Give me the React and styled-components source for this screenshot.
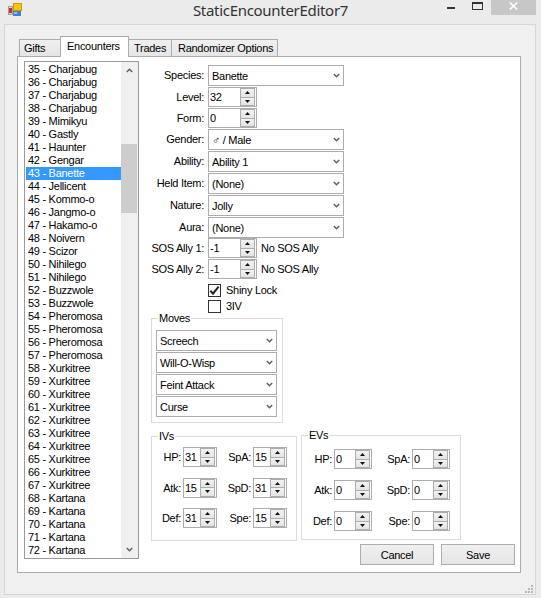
import React from "react";
import styled, { createGlobalStyle } from "styled-components";

const GlobalStyle = createGlobalStyle`
  html, body { margin: 0; padding: 0; background: #ebebeb; }
  #root { width: 541px; height: 598px; }
  *, *::before, *::after { box-sizing: border-box; }
`;

const UI_FONT = `"Liberation Sans", Arial, sans-serif`;

const Window = styled.div`
  width: 541px;
  height: 598px;
  background: #ebebeb;
  display: flex;
  flex-direction: column;
  overflow: hidden;
  font-family: ${UI_FONT};
  font-size: 11px;
  letter-spacing: -0.28px;
  color: #000;
`;

const TitleBar = styled.div`
  height: 24px;
  flex-shrink: 0;
  display: grid;
  grid-template-columns: 1fr auto 1fr;
  align-items: start;
`;

const AppIconWrap = styled.div`
  padding: 3px 0 0 8px;
  display: flex;
`;

const Title = styled.div`
  font-family: "Noto Sans", "Open Sans", sans-serif;
  font-size: 15px;
  letter-spacing: -0.3px;
  color: #333;
  line-height: 21px;
`;

const CaptionButtons = styled.div`
  justify-self: end;
  display: flex;
  margin-right: 5px;
`;

const CaptionButton = styled.div`
  width: ${(p) => p.$w}px;
  height: 15px;
  display: flex;
  justify-content: center;
  align-items: flex-start;
  background: ${(p) => p.$bg || "transparent"};
`;

const MinGlyph = styled.span`
  width: 8px;
  height: 2px;
  background: #333;
  margin-top: 7px;
`;

const MaxGlyph = styled.span`
  width: 11px;
  height: 8px;
  border: 1px solid #333;
  border-top-width: 2px;
  margin-top: 2px;
`;

const Client = styled.div`
  position: relative;
  flex: 1;
  margin: 0 5px 3px 4px;
  border: 1px solid #d6d6d6;
  background: #f0f0f0;
  padding: 11px 0 0 12px;
`;

const Grip = styled.svg`
  position: absolute;
  right: 2px;
  bottom: 1px;
`;

const Tabs = styled.div`
  width: 504px;
`;

const TabStrip = styled.div`
  height: 20px;
  display: flex;
  align-items: flex-end;
  padding-left: 2px;
  position: relative;
  z-index: 1;
`;

const Tab = styled.div`
  width: ${(p) => p.$w}px;
  height: ${(p) => (p.$active ? 21 : 17)}px;
  margin-left: -1px;
  margin-bottom: ${(p) => (p.$active ? -1 : 0)}px;
  padding-left: ${(p) => p.$pl}px;
  border: 1px solid #acacac;
  border-bottom: none;
  background: ${(p) =>
    p.$active ? "#ffffff" : "linear-gradient(#f0f0f0, #e5e5e5)"};
  line-height: ${(p) => (p.$active ? 18 : 16)}px;
  white-space: nowrap;
  position: relative;
  z-index: ${(p) => (p.$active ? 2 : 1)};
  &:first-child { margin-left: 0; }
`;

const TabPage = styled.div`
  width: 504px;
  height: 517px;
  border: 1px solid #acacac;
  background: #fff;
  display: flex;
  align-items: flex-start;
`;

const ListBox = styled.div`
  margin: 4px 0 0 6px;
  width: 115px;
  height: 498px;
  border: 1px solid #9a9a9a;
  background: #fff;
  display: flex;
`;

const ListItems = styled.div`
  flex: 1;
  padding: 1px 0 0 1px;
  overflow: hidden;
`;

const ListItem = styled.div`
  height: 13px;
  line-height: 13px;
  padding-left: 2px;
  white-space: nowrap;
  background: ${(p) => (p.$selected ? "#3399ff" : "transparent")};
  color: ${(p) => (p.$selected ? "#fff" : "#000")};
`;

const ScrollBar = styled.div`
  width: 17px;
  background: #f0f0f0;
  display: flex;
  flex-direction: column;
`;

const ScrollArrow = styled.div`
  height: 17px;
  display: flex;
  align-items: center;
  justify-content: center;
  padding-right: 1px;
`;

const ScrollTrack = styled.div`
  flex: 1;
`;

const ScrollThumb = styled.div`
  margin-top: 65px;
  width: 16px;
  height: 69px;
  background: #cdcdcd;
`;

const RightColumn = styled.div`
  margin: 8px 0 0 8px;
  width: 373px;
  display: flex;
  flex-direction: column;
`;

const FieldRow = styled.div`
  height: ${(p) => p.$h}px;
  margin-top: ${(p) => p.$mt || 0}px;
  display: grid;
  grid-template-columns: 57px auto auto;
  column-gap: 4px;
  align-items: start;
  justify-content: start;
`;

const FieldLabel = styled.div`
  text-align: right;
  white-space: nowrap;
  line-height: ${(p) => p.$ch}px;
`;

const Note = styled.div`
  line-height: 20px;
  white-space: nowrap;
`;

const Combo = styled.div`
  width: ${(p) => p.$w}px;
  height: 21px;
  border: 1px solid #acacac;
  background: #fff;
  display: flex;
  align-items: center;
  padding-left: 3px;
  padding-right: 3px;
`;

const ComboText = styled.span`
  flex: 1;
  white-space: nowrap;
`;

const Numeric = styled.div`
  width: ${(p) => p.$w}px;
  height: 20px;
  border: 1px solid #abadb3;
  background: #fff;
  display: flex;
`;

const NumText = styled.span`
  flex: 1;
  padding-left: 1px;
  line-height: 18px;
`;

const Spin = styled.div`
  width: 15px;
  margin-right: 1px;
  display: flex;
  flex-direction: column;
`;

const SpinHalf = styled.div`
  flex: 1;
  border: 1px solid #adadad;
  margin-top: ${(p) => (p.$down ? -1 : 0)}px;
  background: linear-gradient(#f2f2f2, #e4e4e4);
  display: flex;
  align-items: center;
  justify-content: center;
`;

const CheckRow = styled.div`
  display: flex;
  align-items: center;
  gap: 5px;
`;

const CheckBox = styled.span`
  width: 13px;
  height: 13px;
  border: 1px solid #333;
  background: #fff;
  display: flex;
  align-items: center;
  justify-content: center;
`;

const CheckText = styled.span`
  line-height: 13px;
  white-space: nowrap;
`;

const Group = styled.div`
  position: relative;
  width: ${(p) => p.$w}px;
  height: ${(p) => p.$h}px;
  margin-left: ${(p) => p.$ml || 0}px;
  margin-top: ${(p) => p.$mt || 0}px;
  border: 1px solid #dcdcdc;
  flex-shrink: 0;
`;

const Legend = styled.span`
  position: absolute;
  top: -7px;
  left: 6px;
  padding: 0 1px;
  background: #fff;
  line-height: 13px;
`;

const MovesList = styled.div`
  padding: 11px 0 0 4px;
  display: flex;
  flex-direction: column;
  gap: 1px;
`;

const StatsRow = styled.div`
  margin-top: 12px;
  height: 106px;
  display: flex;
  align-items: flex-start;
`;

const StatGrid = styled.div`
  display: grid;
  grid-template-columns: ${(p) => p.$cols};
  grid-auto-rows: 20px;
  column-gap: 2px;
  row-gap: ${(p) => p.$rg}px;
  padding-top: ${(p) => p.$pt}px;
  align-items: center;
`;

const StatLabel = styled.div`
  text-align: right;
  white-space: nowrap;
`;

const ButtonRow = styled.div`
  margin-top: 3px;
  padding-right: 5px;
  display: flex;
  justify-content: flex-end;
  gap: 7px;
`;

const Button = styled.div`
  width: 74px;
  height: 21px;
  border: 1px solid #acacac;
  background: linear-gradient(#f0f0f0, #e5e5e5);
  display: flex;
  align-items: center;
  justify-content: center;
`;

const Chevron = ({ up, color = "#606060" }) => (
  <svg width="7" height="5" viewBox="0 0 7 5">
    <polyline
      points={up ? "0.8,4 3.5,1.3 6.2,4" : "0.8,1 3.5,3.7 6.2,1"}
      fill="none"
      stroke={color}
      strokeWidth="1.5"
    />
  </svg>
);

const Tri = ({ up }) => (
  <svg width="5" height="3" viewBox="0 0 5 3">
    <polygon points={up ? "2.5,0 5,3 0,3" : "0,0 5,0 2.5,3"} fill="#111" />
  </svg>
);

const ComboBox = ({ value, w = 136 }) => (
  <Combo $w={w}>
    <ComboText>{value}</ComboText>
    <Chevron />
  </Combo>
);

const NumBox = ({ value, w = 49 }) => (
  <Numeric $w={w}>
    <NumText>{value}</NumText>
    <Spin>
      <SpinHalf>
        <Tri up />
      </SpinHalf>
      <SpinHalf $down>
        <Tri />
      </SpinHalf>
    </Spin>
  </Numeric>
);

const Check = ({ checked, label }) => (
  <CheckRow>
    <CheckBox>
      {checked && (
        <svg width="11" height="11" viewBox="0 0 11 11">
          <polyline
            points="1.3,5.6 4,8.6 9.6,1.6"
            fill="none"
            stroke="#222"
            strokeWidth="2"
          />
        </svg>
      )}
    </CheckBox>
    <CheckText>{label}</CheckText>
  </CheckRow>
);

const AppIcon = () => (
  <svg width="14" height="13" viewBox="0 0 14 13">
    <rect x="0.5" y="3.5" width="4" height="8" fill="#d8d8d8" stroke="#a0a0a0" />
    <rect x="1" y="5" width="3" height="5" fill="#d42a2a" />
    <rect x="5.5" y="0.5" width="8" height="7" fill="#f7c600" stroke="#c79a00" />
    <rect x="5" y="8" width="8" height="5" fill="#3d7fd9" />
    <rect x="6" y="9" width="3" height="2" fill="#9cc2f0" />
  </svg>
);

const listEntries = [
  "35 - Charjabug",
  "36 - Charjabug",
  "37 - Charjabug",
  "38 - Charjabug",
  "39 - Mimikyu",
  "40 - Gastly",
  "41 - Haunter",
  "42 - Gengar",
  "43 - Banette",
  "44 - Jellicent",
  "45 - Kommo-o",
  "46 - Jangmo-o",
  "47 - Hakamo-o",
  "48 - Noivern",
  "49 - Scizor",
  "50 - Nihilego",
  "51 - Nihilego",
  "52 - Buzzwole",
  "53 - Buzzwole",
  "54 - Pheromosa",
  "55 - Pheromosa",
  "56 - Pheromosa",
  "57 - Pheromosa",
  "58 - Xurkitree",
  "59 - Xurkitree",
  "60 - Xurkitree",
  "61 - Xurkitree",
  "62 - Xurkitree",
  "63 - Xurkitree",
  "64 - Xurkitree",
  "65 - Xurkitree",
  "66 - Xurkitree",
  "67 - Xurkitree",
  "68 - Kartana",
  "69 - Kartana",
  "70 - Kartana",
  "71 - Kartana",
  "72 - Kartana",
];

const tabs = [
  { label: "Gifts", w: 42, pl: 4 },
  { label: "Encounters", w: 69, pl: 6, active: true },
  { label: "Trades", w: 44, pl: 5 },
  { label: "Randomizer Options", w: 107, pl: 6 },
];

const comboFields = [
  { label: "Gender:", value: "♂ / Male" },
  { label: "Ability:", value: "Ability 1" },
  { label: "Held Item:", value: "(None)" },
  { label: "Nature:", value: "Jolly" },
];

const moves = ["Screech", "Will-O-Wisp", "Feint Attack", "Curse"];

const ivs = [
  ["HP:", "31", "SpA:", "15"],
  ["Atk:", "15", "SpD:", "31"],
  ["Def:", "31", "Spe:", "15"],
];

const evs = [
  ["HP:", "0", "SpA:", "0"],
  ["Atk:", "0", "SpD:", "0"],
  ["Def:", "0", "Spe:", "0"],
];

const StatBlock = ({ rows, cols, boxW, rg, pt }) => (
  <StatGrid $cols={cols} $rg={rg} $pt={pt}>
    {rows.map((r, i) => (
      <React.Fragment key={i}>
        <StatLabel>{r[0]}</StatLabel>
        <NumBox value={r[1]} w={boxW} />
        <StatLabel>{r[2]}</StatLabel>
        <NumBox value={r[3]} w={boxW} />
      </React.Fragment>
    ))}
  </StatGrid>
);

export default function App() {
  return (
    <>
      <GlobalStyle />
      <Window>
        <TitleBar>
          <AppIconWrap>
            <AppIcon />
          </AppIconWrap>
          <Title>StaticEncounterEditor7</Title>
          <CaptionButtons>
            <CaptionButton $w={27}>
              <MinGlyph />
            </CaptionButton>
            <CaptionButton $w={27}>
              <MaxGlyph />
            </CaptionButton>
            <CaptionButton $w={45} $bg="#c7c7c7">
              <svg width="9" height="8" viewBox="0 0 9 8" style={{ marginTop: 2 }}>
                <path d="M0.8 0.5 L8.2 7.5 M8.2 0.5 L0.8 7.5" stroke="#fff" strokeWidth="1.6" />
              </svg>
            </CaptionButton>
          </CaptionButtons>
        </TitleBar>

        <Client>
          <Tabs>
            <TabStrip>
              {tabs.map((t) => (
                <Tab key={t.label} $w={t.w} $pl={t.pl} $active={t.active}>
                  {t.label}
                </Tab>
              ))}
            </TabStrip>
            <TabPage>
              <ListBox>
                <ListItems>
                  {listEntries.map((e) => (
                    <ListItem key={e} $selected={e === "43 - Banette"}>
                      {e}
                    </ListItem>
                  ))}
                </ListItems>
                <ScrollBar>
                  <ScrollArrow>
                    <Chevron up />
                  </ScrollArrow>
                  <ScrollTrack>
                    <ScrollThumb />
                  </ScrollTrack>
                  <ScrollArrow>
                    <Chevron />
                  </ScrollArrow>
                </ScrollBar>
              </ListBox>

              <RightColumn>
                <FieldRow $h={22}>
                  <FieldLabel $ch={21}>Species:</FieldLabel>
                  <ComboBox value="Banette" />
                </FieldRow>
                <FieldRow $h={21}>
                  <FieldLabel $ch={20}>Level:</FieldLabel>
                  <NumBox value="32" />
                </FieldRow>
                <FieldRow $h={21}>
                  <FieldLabel $ch={20}>Form:</FieldLabel>
                  <NumBox value="0" />
                </FieldRow>
                {comboFields.map((f) => (
                  <FieldRow $h={22} key={f.label}>
                    <FieldLabel $ch={21}>{f.label}</FieldLabel>
                    <ComboBox value={f.value} />
                  </FieldRow>
                ))}
                <FieldRow $h={21}>
                  <FieldLabel $ch={21}>Aura:</FieldLabel>
                  <ComboBox value="(None)" />
                </FieldRow>
                <FieldRow $h={21}>
                  <FieldLabel $ch={20}>SOS Ally 1:</FieldLabel>
                  <NumBox value="-1" />
                  <Note>No SOS Ally</Note>
                </FieldRow>
                <FieldRow $h={21}>
                  <FieldLabel $ch={20}>SOS Ally 2:</FieldLabel>
                  <NumBox value="-1" />
                  <Note>No SOS Ally</Note>
                </FieldRow>
                <FieldRow $h={16} $mt={4}>
                  <span />
                  <Check checked label="Shiny Lock" />
                </FieldRow>
                <FieldRow $h={13}>
                  <span />
                  <Check label="3IV" />
                </FieldRow>

                <Group $w={132} $h={105} $ml={4} $mt={5}>
                  <Legend>Moves</Legend>
                  <MovesList>
                    {moves.map((m) => (
                      <ComboBox key={m} value={m} w={121} />
                    ))}
                  </MovesList>
                </Group>

                <StatsRow>
                  <Group $w={146} $h={105} $ml={4} $mt={1}>
                    <Legend>IVs</Legend>
                    <StatBlock rows={ivs} cols="29px 34px 32px 34px" boxW={34} rg={10.5} pt={10} />
                  </Group>
                  <Group $w={160} $h={105} $ml={4}>
                    <Legend>EVs</Legend>
                    <StatBlock rows={evs} cols="30px 38px 36px 38px" boxW={38} rg={11} pt={13} />
                  </Group>
                </StatsRow>

                <ButtonRow>
                  <Button>Cancel</Button>
                  <Button>Save</Button>
                </ButtonRow>
              </RightColumn>
            </TabPage>
          </Tabs>
          <Grip width="8" height="8" viewBox="0 0 8 8">
            {[
              [6, 0],
              [3, 3],
              [6, 3],
              [0, 6],
              [3, 6],
              [6, 6],
            ].map(([x, y]) => (
              <rect key={`${x}-${y}`} x={x} y={y} width="2" height="2" fill="#b8b8b8" />
            ))}
          </Grip>
        </Client>
      </Window>
    </>
  );
}
